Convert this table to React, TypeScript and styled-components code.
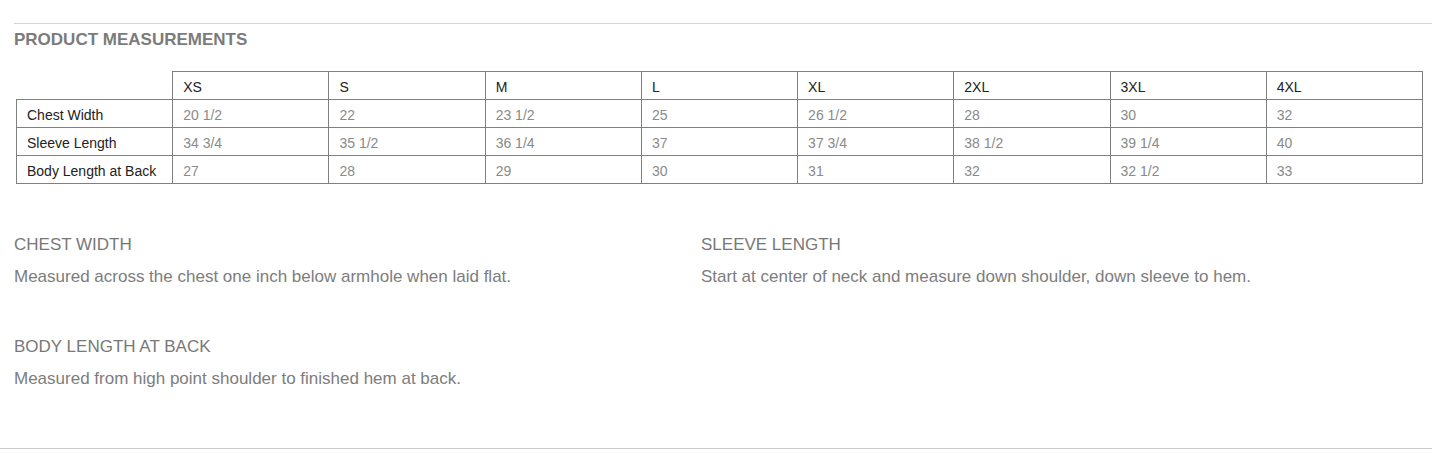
import React from "react";
import styled, { createGlobalStyle } from "styled-components";

const GlobalStyle = createGlobalStyle`
  body {
    margin: 0;
    background: #fff;
    font-family: "Liberation Sans", Arial, sans-serif;
  }
`;

const Page = styled.div`
  height: 449px;
  padding-top: 23px;
  border-bottom: 1px solid #cccccc;
  box-sizing: border-box;
`;

const Section = styled.section`
  margin-left: 14px;
  border-top: 1px solid #d4d4d4;
`;

const Title = styled.h2`
  margin: 0;
  padding-top: 6px;
  font-size: 17px;
  line-height: 20px;
  font-weight: bold;
  color: #7b7b7b;
`;

const Table = styled.table`
  margin: 21px 0 0 2px;
  width: 1407px;
  border-collapse: collapse;
  table-layout: fixed;
  font-size: 14px;
`;

const Cell = styled.td<{ $head?: boolean; $blank?: boolean }>`
  height: 28px;
  padding: 3px 10px 0;
  border: ${(p) => (p.$blank ? "none" : "1px solid #7f7f7f")};
  border-bottom: 1px solid #7f7f7f;
  color: ${(p) => (p.$head ? "#222" : "#8a8a8a")};
  text-align: left;
  vertical-align: middle;
  box-sizing: border-box;
`;

const Notes = styled.div`
  display: grid;
  grid-template-columns: 687px 1fr;
  row-gap: 50px;
  margin-top: 51px;
`;

const Note = styled.div``;

const NoteTitle = styled.h3`
  margin: 0;
  font-size: 17px;
  line-height: 20px;
  font-weight: normal;
  color: #787878;
`;

const NoteText = styled.p`
  margin: 12px 0 0;
  font-size: 17px;
  line-height: 20px;
  color: #7d7d7d;
`;

const sizes = ["XS", "S", "M", "L", "XL", "2XL", "3XL", "4XL"];
const rows = [
  { label: "Chest Width", values: ["20 1/2", "22", "23 1/2", "25", "26 1/2", "28", "30", "32"] },
  { label: "Sleeve Length", values: ["34 3/4", "35 1/2", "36 1/4", "37", "37 3/4", "38 1/2", "39 1/4", "40"] },
  { label: "Body Length at Back", values: ["27", "28", "29", "30", "31", "32", "32 1/2", "33"] },
];

const notes = [
  { title: "CHEST WIDTH", text: "Measured across the chest one inch below armhole when laid flat." },
  { title: "SLEEVE LENGTH", text: "Start at center of neck and measure down shoulder, down sleeve to hem." },
  { title: "BODY LENGTH AT BACK", text: "Measured from high point shoulder to finished hem at back." },
];

const App = () => {
  return (
    <Page>
      <GlobalStyle />
      <Section>
        <Title>PRODUCT MEASUREMENTS</Title>
        <Table>
          <tbody>
            <tr>
              <Cell $blank />
              {sizes.map((s) => (
                <Cell key={s} $head>
                  {s}
                </Cell>
              ))}
            </tr>
            {rows.map((r) => (
              <tr key={r.label}>
                <Cell $head>{r.label}</Cell>
                {r.values.map((v, i) => (
                  <Cell key={i}>{v}</Cell>
                ))}
              </tr>
            ))}
          </tbody>
        </Table>
        <Notes>
          {notes.map((n) => (
            <Note key={n.title}>
              <NoteTitle>{n.title}</NoteTitle>
              <NoteText>{n.text}</NoteText>
            </Note>
          ))}
        </Notes>
      </Section>
    </Page>
  );
};

export default App;
